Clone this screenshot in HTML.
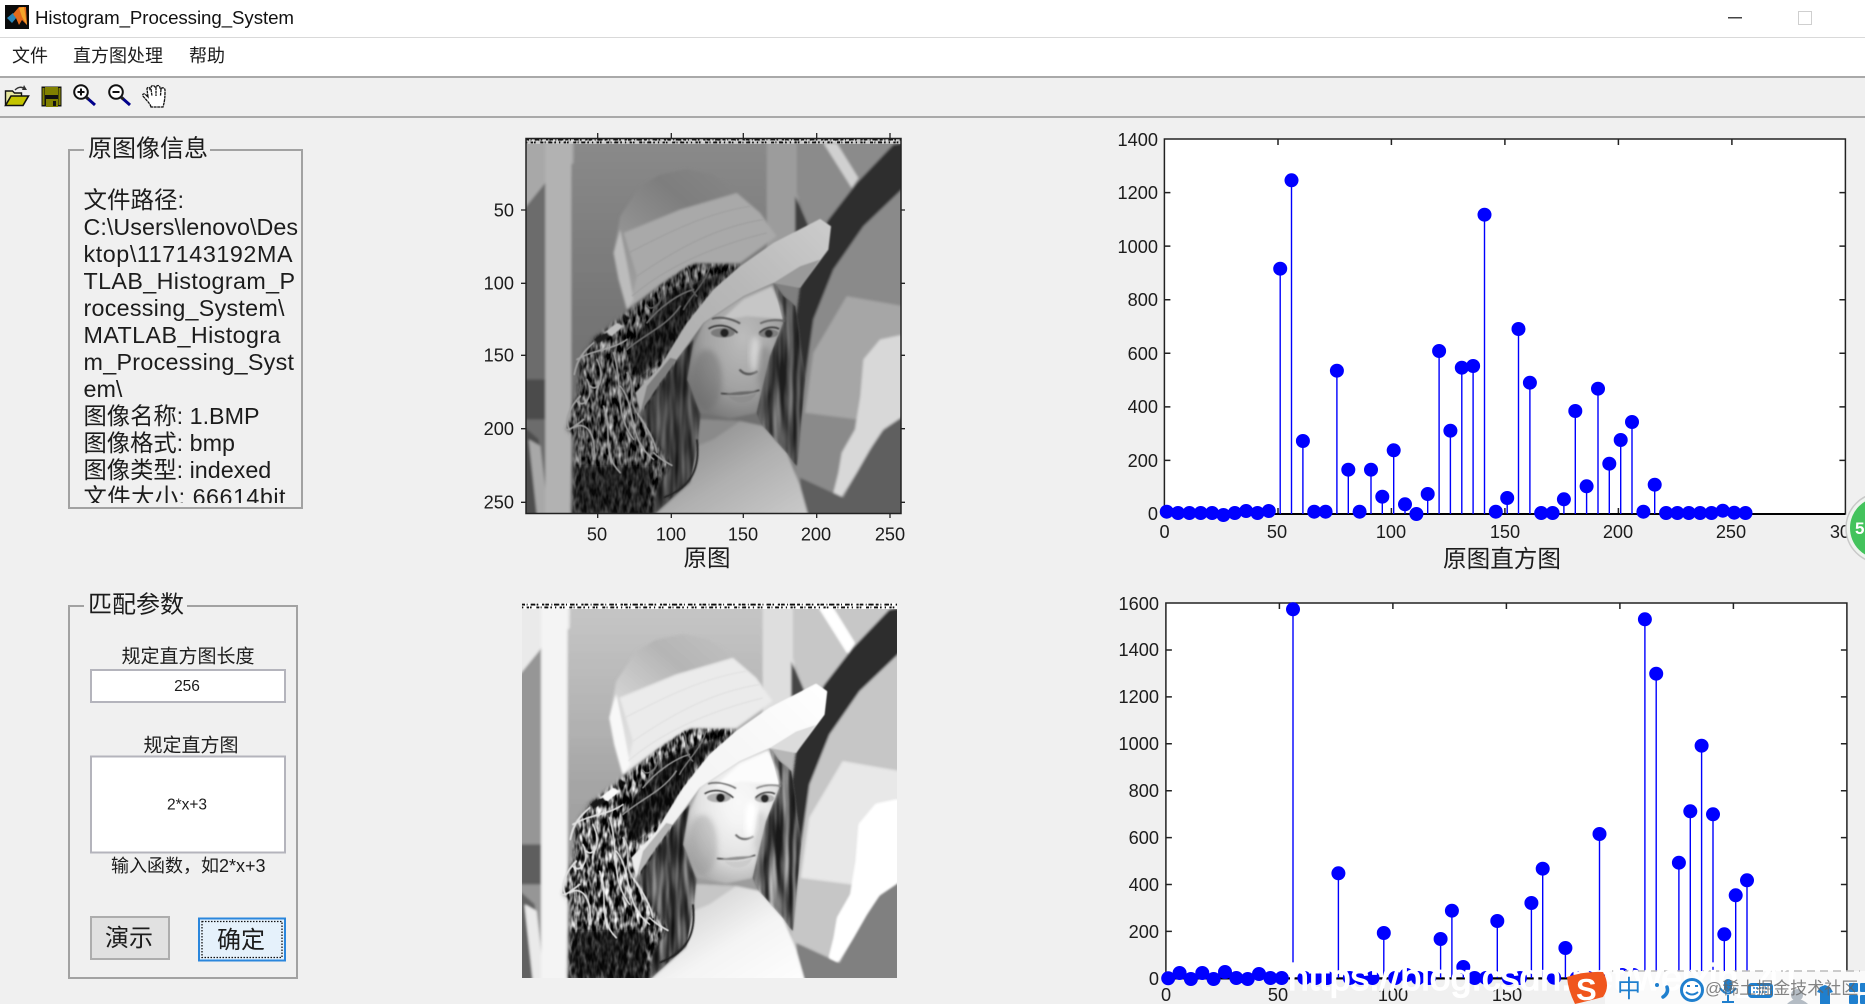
<!DOCTYPE html>
<html lang="zh">
<head>
<meta charset="utf-8">
<title>Histogram_Processing_System</title>
<style>
html,body{margin:0;padding:0;width:1865px;height:1004px;overflow:hidden;background:#f0f0f0}
svg.root{position:absolute;left:0;top:0;display:block}
text{font-family:"Liberation Sans","Noto Sans CJK SC",sans-serif;fill:#1c1c1c}
.t{font-size:18.2px}
.e{text-anchor:end}
.m{text-anchor:middle}
</style>
</head>
<body>
<svg class="root" xmlns="http://www.w3.org/2000/svg" width="1865" height="1004" viewBox="0 0 1865 1004">
<defs>
<filter id="b" x="-5%" y="-5%" width="110%" height="110%"><feGaussianBlur stdDeviation="4"/></filter>
<filter id="b2" x="-20%" y="-20%" width="140%" height="140%"><feGaussianBlur stdDeviation="2"/></filter>
<filter id="b3" x="-30%" y="-30%" width="160%" height="160%"><feGaussianBlur stdDeviation="9"/></filter>
<filter id="b4" x="-20%" y="-20%" width="140%" height="140%"><feGaussianBlur stdDeviation="1.2"/></filter>
<filter id="hair" color-interpolation-filters="sRGB" x="-5%" y="-5%" width="110%" height="110%">
<feTurbulence type="fractalNoise" baseFrequency=".075 .03" numOctaves="2" seed="7" result="n"/>
<feColorMatrix in="n" type="matrix" values="1.5 0 0 0 -.47  1.5 0 0 0 -.47  1.5 0 0 0 -.47  0 0 0 0 1" result="g"/>
<feGaussianBlur in="SourceAlpha" stdDeviation="6" result="sa"/>
<feComposite in="g" in2="sa" operator="in"/>
<feGaussianBlur stdDeviation="1"/>
</filter>
<filter id="hair2" color-interpolation-filters="sRGB" x="0" y="0" width="100%" height="100%">
<feTurbulence type="fractalNoise" baseFrequency=".05 .006" numOctaves="2" seed="3" result="n"/>
<feColorMatrix in="n" type="matrix" values="1.1 0 0 0 -.28  1.1 0 0 0 -.28  1.1 0 0 0 -.28  0 0 0 0 1" result="g"/>
<feComposite in="g" in2="SourceAlpha" operator="in"/>
<feGaussianBlur stdDeviation="1.5"/>
</filter>
<filter id="bright" color-interpolation-filters="sRGB" x="0" y="0" width="100%" height="100%">
<feComponentTransfer>
<feFuncR type="table" tableValues="0 .08 .2 .38 .55 .72 .86 .96 1 1 1"/>
<feFuncG type="table" tableValues="0 .08 .2 .38 .55 .72 .86 .96 1 1 1"/>
<feFuncB type="table" tableValues="0 .08 .2 .38 .55 .72 .86 .96 1 1 1"/>
</feComponentTransfer>
</filter>
<clipPath id="c1"><rect x="70" y="150" width="232" height="353"/></clipPath>
<linearGradient id="sh" x1="0" y1="0" x2="1" y2="1"><stop offset="0" stop-color="#808080"/><stop offset=".55" stop-color="#b0b0b0"/><stop offset="1" stop-color="#cacaca"/></linearGradient>
<linearGradient id="cr" x1="0" y1="1" x2="1" y2="0"><stop offset="0" stop-color="#a8a8a8"/><stop offset=".6" stop-color="#7e7e7e"/><stop offset="1" stop-color="#8a8a8a"/></linearGradient>
<linearGradient id="bg" x1="0" y1="0" x2="0" y2="1"><stop offset="0" stop-color="#8a8a8a"/><stop offset=".5" stop-color="#747474"/><stop offset="1" stop-color="#6a6a6a"/></linearGradient>
<linearGradient id="bm" x1="0" y1="1" x2="1" y2="0"><stop offset="0" stop-color="#a8a8a8"/><stop offset=".6" stop-color="#b8b8b8"/><stop offset="1" stop-color="#cccccc"/></linearGradient>
<radialGradient id="fc" cx=".58" cy=".4" r=".65"><stop offset="0" stop-color="#bcbcbc"/><stop offset=".6" stop-color="#a2a2a2"/><stop offset="1" stop-color="#787878"/></radialGradient>
<g id="lena">
<rect x="137" y="55" width="1126" height="1126" fill="#7f7f7f"/>
<g filter="url(#b)">
<rect x="265" y="60" width="610" height="1130" fill="url(#bg)"/>
<polygon points="130,60 280,60 280,130 195,190 130,270" fill="#a8a8a8"/>
<polygon points="130,270 195,190 195,1190 130,1190" fill="#6c6c6c"/>
<rect x="130" y="780" width="65" height="120" fill="#4c4c4c"/>
<polygon points="130,920 175,960 195,1190 130,1190" fill="#4e4e4e"/>
<polygon points="145,960 180,980 205,1190 170,1190" fill="#a8a8a8"/>
<rect x="195" y="60" width="78" height="1130" fill="#b2b2b2"/>
<rect x="860" y="60" width="95" height="330" fill="#9c9c9c"/>
<polygon points="950,60 1270,60 1270,100 1130,190 1045,300 990,330 950,220" fill="#8b8b8b"/>
<polygon points="945,230 990,330 970,340 945,380" fill="#3e3e3e"/>
<polygon points="1030,70 1070,70 1135,175 1115,205" fill="#d0d0d0"/>
<polygon points="1270,205 1270,1190 960,1190 945,1040 975,780 1000,600 1060,450 1150,320" fill="#8a8a8a"/>
<polygon points="1100,530 1270,560 1270,640 1150,720 1130,900 975,880 1000,700" fill="#a6a6a6"/>
<path d="M1270 70 L1240 75 L1130 190 L1045 300 L960 500 L945 620 L965 780 L975 780 L1000 600 L1060 450 L1150 320 L1270 205Z" fill="#2e2e2e"/>
<polygon points="975,895 1120,935 1085,1000 1070,1080 950,1060" fill="#8a8a8a"/>
<polygon points="1270,890 1200,940 1130,1060 1090,1135 960,1075 965,1190 1270,1190" fill="#5e5e5e"/>
<path d="M1270 645 L1200 660 L1150 720 L1140 830 L1125 930 L1085 1000 L1075 1060 L1060 1120 L1085 1132 L1130 1060 L1170 990 L1210 930 L1270 890Z" fill="#d8d8d8"/>
<polygon points="520,1190 630,1090 650,980 660,900 780,905 850,920 920,1000 960,1100 985,1190" fill="url(#sh)"/>
<polygon points="660,900 780,905 700,960 650,980" fill="#8a8a8a"/>
<path d="M590 720 L640 660 L620 780 L660 885 L650 980 L630 1085 L525 1180 L500 1190 L470 1000 L480 860Z" fill="#333"/>
<polygon points="880,490 910,530 945,560 975,780 950,1040 920,1000 850,920 830,880 870,710 910,610" fill="#4c4c4c"/>
<polygon points="670,610 790,530 880,490 910,610 870,710 830,880 750,897 660,880 620,780 640,680" fill="url(#fc)"/>
<polygon points="790,540 875,500 905,560 915,600 800,590 720,605" fill="#c6c6c6"/>
</g>
<path d="M590 720 L640 660 L620 780 L660 885 L650 980 L630 1085 L525 1180 L500 1190 L470 1000 L480 860Z" filter="url(#hair2)" opacity=".55"/>
<polygon points="880,490 910,530 945,560 975,780 950,1040 920,1000 850,920 830,880 870,710 910,610" filter="url(#hair2)" opacity=".6"/>
<path d="M340 660 L300 720 L290 830 L260 930 L285 960 L280 1185 L510 1185 L530 1100 L570 1035 L520 960 L480 880 L540 790 L590 720 L660 560 L780 435 L620 430 L440 580Z" filter="url(#hair)"/>
<path d="M440 690 L560 520 L760 445 L660 550 L570 700 L470 780Z" fill="#111" opacity=".7" filter="url(#b3)"/>
<path d="M285 1040 L520 1040 L510 1190 L280 1190Z" fill="#111" opacity=".65" filter="url(#b3)"/>
<g filter="url(#b4)" fill="none" stroke="#a0a0a0" stroke-width="5" stroke-linecap="round">
<path d="M340 670 C310 695 290 720 282 765"/><path d="M300 830 C270 860 250 900 268 932"/><path d="M310 900 C285 920 265 935 256 930"/>
<path d="M520 1000 C540 1020 560 1030 575 1038"/><path d="M290 720 C340 690 400 690 440 660"/><path d="M320 780 C345 830 310 870 290 845"/>
<path d="M400 700 C430 800 400 880 460 960"/><path d="M420 800 C470 860 440 960 520 1020"/><path d="M370 860 C400 940 360 1000 420 1060"/>
<path d="M280 925 C320 900 350 950 340 1020"/><path d="M470 880 C505 930 525 970 530 1000"/><path d="M350 720 C380 780 350 820 330 800"/>
<path d="M440 760 C470 800 440 840 470 880" stroke="#8a8a8a"/><path d="M500 610 C540 560 600 520 640 510" stroke="#6a6a6a"/><path d="M440 690 C500 640 560 620 600 560" stroke="#6a6a6a"/>
<path d="M620 440 C640 470 620 500 650 530" stroke="#5a5a5a"/><path d="M690 440 C670 500 630 530 610 570" stroke="#5a5a5a"/><path d="M540 500 C560 540 520 580 500 560" stroke="#5a5a5a"/>
</g>
<g filter="url(#b)">
<path d="M400 400 L420 290 L480 200 L540 165 L620 148 L700 165 L770 215 L840 280 L890 350 L780 430 L640 430 L560 480 L440 570 L415 480Z" fill="url(#cr)"/>
<path d="M430 340 L600 270 L770 220 L840 280 L890 350 L780 430 L640 430 L560 480 L450 560 L470 470Z" fill="#a9a9a9"/>
<path d="M400 400 L420 330 L440 430 L460 540 L440 570 L415 480Z" fill="#bcbcbc"/>
</g>
<g filter="url(#b2)">
<path d="M1020 298 L1053 320 L1045 390 L960 505 L880 490 L790 530 L670 610 L590 720 L540 790 L480 880 L465 820 L540 740 L620 610 L700 510 L780 440 L880 370Z" fill="url(#bm)"/>
<path d="M880 490 L960 505 L1020 420 L960 440Z" fill="#9a9a9a"/>
<path d="M480 880 L540 790 L590 720 L570 715 L500 800Z" fill="#7e7e7e"/>
<g fill="none" stroke="#9a9a9a" stroke-width="2.500">
<path d="M470 470 C600 380 720 320 850 300"/><path d="M455 530 C560 440 700 380 860 340"/><path d="M445 400 C560 340 680 280 810 260"/>
</g>
<path d="M430 585 l20 10 -15 15Z" fill="#111"/>
<path d="M370 640 l40 -30 20 10 -35 30Z" fill="#bdbdbd"/>
<path d="M340 660 l40 -22 10 12 -35 20Z" fill="#1c1c1c"/>
<ellipse cx="728" cy="640" rx="36" ry="14" fill="#7a7a7a"/><ellipse cx="865" cy="642" rx="30" ry="13" fill="#7e7e7e"/>
<circle cx="733" cy="640" r="13" fill="#222"/><circle cx="866" cy="642" r="12" fill="#2c2c2c"/>
<path d="M685 628 C710 612 745 615 772 640" fill="none" stroke="#2a2a2a" stroke-width="5"/><path d="M838 640 C855 622 880 620 897 628" fill="none" stroke="#333" stroke-width="5"/>
<path d="M695 598 C720 590 755 597 780 612" fill="none" stroke="#555" stroke-width="6"/><path d="M840 612 C865 600 890 600 915 605" fill="none" stroke="#666" stroke-width="6"/>
<path d="M722 822 C760 826 800 826 838 812" fill="none" stroke="#3a3a3a" stroke-width="5"/>
<path d="M735 824 C770 815 810 815 830 815 L835 815 C800 826 760 828 735 824Z" fill="#6a6a6a"/>
<path d="M745 830 C780 834 810 830 830 820 C815 855 770 862 745 830Z" fill="#8e8e8e"/>
<path d="M650 960 C660 1040 640 1100 550 1135" fill="none" stroke="#222" stroke-width="6"/>
<path d="M778 750 Q800 775 832 755" fill="none" stroke="#555" stroke-width="7"/>
</g>
<ellipse cx="825" cy="705" rx="15" ry="55" fill="#dedede" opacity=".8" filter="url(#b3)"/>
<ellipse cx="680" cy="780" rx="45" ry="90" fill="#6a6a6a" opacity=".45" filter="url(#b3)"/>
<ellipse cx="855" cy="750" rx="24" ry="70" fill="#6a6a6a" opacity=".35" filter="url(#b3)"/>
<rect x="137" y="55" width="1126" height="18" fill="#c8c8c8"/>
<g fill="none" stroke="#111">
<path d="M137 60H1263" stroke-width="6" stroke-dasharray="9 5 3 9 14 4 5 11 7 3 11 7 3 5 16 6"/>
<path d="M137 68H1263" stroke-width="6" stroke-dasharray="4 10 7 3 5 14 9 4 3 8 12 6 5 9"/>
</g>
<path d="M137 64H1263" stroke="#f4f4f4" stroke-width="3" stroke-dasharray="6 9 12 5 3 13 8 4"/>
</g>
</defs>

<!-- title bar -->
<rect x="0" y="0" width="1865" height="37" fill="#fff"/>
<rect x="0" y="37" width="1865" height="1" fill="#d9d9d9"/>
<rect x="5" y="5" width="24" height="24" fill="#0b0b0b"/>
<polygon points="7,18 13,13 17,17 12,23" fill="#2a86b8"/>
<polygon points="13,14 19,7 26,7 27,25 22,20 19,25 16,18" fill="#e36a1b"/>
<polygon points="19,8 24,7 27,25 22,17" fill="#f4a52a"/>
<text x="35" y="24" font-size="18.7" style="fill:#111" textLength="259">Histogram_Processing_System</text>
<rect x="1728" y="17" width="14" height="1.5" fill="#444"/>
<rect x="1798.5" y="11.5" width="13" height="13" fill="none" stroke="#cfcfcf"/>

<!-- menu bar -->
<rect x="0" y="38" width="1865" height="39" fill="#fff"/>
<rect x="0" y="76" width="1865" height="2" fill="#a9a9a9"/>
<text x="12" y="62" font-size="18">文件</text>
<text x="73" y="62" font-size="18">直方图处理</text>
<text x="189" y="62" font-size="18">帮助</text>

<!-- toolbar -->
<rect x="0" y="116" width="1865" height="2" fill="#a9a9a9"/>
<path d="M5.5 105 V91 h7 l2 2 h7 v3" fill="#e8e8a0" stroke="#111" stroke-width="1.4"/>
<path d="M5.5 105.500 L11 96 H28.500 L23 105.500Z" fill="#c4c400" stroke="#111" stroke-width="1.6"/>
<path d="M15 90 q5 -5 10 -1" fill="none" stroke="#333" stroke-width="1.4"/><path d="M24 85 l3 5 -5 0Z" fill="#333"/>
<rect x="41.500" y="86.500" width="20" height="20" fill="#111"/>
<rect x="45" y="87" width="13" height="8" fill="#808000"/><rect x="42.500" y="88" width="2" height="17" fill="#808000"/><rect x="58.500" y="88" width="2" height="17" fill="#808000"/>
<rect x="46" y="99" width="12" height="8" fill="#808000"/><rect x="53" y="101" width="3" height="5" fill="#111"/>
<circle cx="81" cy="92" r="6.800" fill="#fff" stroke="#111" stroke-width="2"/><path d="M77.500 92h7M81 88.500v7" stroke="#111" stroke-width="2"/><path d="M86 97l9 8" stroke="#00008b" stroke-width="3"/><path d="M86 97l2.500 2.200" stroke="#222" stroke-width="3"/>
<circle cx="116" cy="92" r="6.800" fill="#fff" stroke="#111" stroke-width="2"/><path d="M112.500 92h7" stroke="#111" stroke-width="2"/><path d="M121 97l9 8" stroke="#00008b" stroke-width="3"/><path d="M121 97l2.500 2.200" stroke="#222" stroke-width="3"/>
<path d="M151 107 C150 103 146 100 143 96 C142 94 144 93 146 95 L148 97 L147 89 C147 87 150 87 150 89 L151 88 C151 85 154 85 155 87 L156 87 C157 85 160 85 160 88 L161 89 C162 87 165 88 165 90 C165 96 165 100 163 107 Z M151 89 L152 96 M156 87 L156 96 M161 89 L160.500 96" fill="#fff" stroke="#111" stroke-width="1.300" stroke-dasharray="3 .6"/>

<!-- panel 1 -->
<path d="M84 150 H69 V508 H302 V150 H210" fill="none" stroke="#a2a2a2" stroke-width="2"/>
<text x="88" y="156.500" font-size="24">原图像信息</text>
<g clip-path="url(#c1)">
<text x="83.500" y="208" font-size="23.500">文件路径:</text>
<text x="83.500" y="235" font-size="23.300" textLength="214.500">C:\Users\lenovo\Des</text>
<text x="83.500" y="262" font-size="23.300" textLength="209">ktop\117143192MA</text>
<text x="83.500" y="289" font-size="23.300" textLength="211.500">TLAB_Histogram_P</text>
<text x="83.500" y="316" font-size="23.300" textLength="201">rocessing_System\</text>
<text x="83.500" y="343" font-size="23.300" textLength="197">MATLAB_Histogra</text>
<text x="83.500" y="370" font-size="23.300" textLength="210.500">m_Processing_Syst</text>
<text x="83.500" y="397" font-size="23.300">em\</text>
<text x="83.500" y="424" font-size="23.300">图像名称: 1.BMP</text>
<text x="83.500" y="451" font-size="23.300">图像格式: bmp</text>
<text x="83.500" y="478" font-size="23.300">图像类型: indexed</text>
<text x="83.500" y="505" font-size="23.300" textLength="202">文件大小: 66614bit</text>
</g>

<!-- panel 2 -->
<path d="M84 606 H69 V978 H297 V606 H187" fill="none" stroke="#a2a2a2" stroke-width="2"/>
<text x="88" y="612.500" font-size="24">匹配参数</text>
<text x="188" y="662.500" font-size="19" class="m">规定直方图长度</text>
<rect x="91" y="670" width="194" height="32" fill="#fff" stroke="#b4b4bc" stroke-width="2"/>
<text x="187" y="691" font-size="15.500" class="m">256</text>
<text x="191" y="751.500" font-size="19" class="m">规定直方图</text>
<rect x="91" y="756.500" width="194" height="96" fill="#fff" stroke="#b4b4bc" stroke-width="2"/>
<text x="187" y="809.500" font-size="15.500" class="m">2*x+3</text>
<text x="111" y="872" font-size="18">输入函数，如2*x+3</text>
<rect x="91" y="917" width="78" height="42" fill="#e1e1e1" stroke="#adadad" stroke-width="2"/>
<text x="129" y="946" font-size="24" class="m">演示</text>
<rect x="199" y="918.500" width="86" height="42" fill="#e5f1fb" stroke="#2a86dc" stroke-width="2"/>
<rect x="202" y="921.500" width="80" height="36" fill="none" stroke="#111" stroke-width="1.300" stroke-dasharray="1.500 1.500"/>
<text x="241" y="948" font-size="24" class="m">确定</text>

<!-- image 1 -->
<svg x="526" y="138" width="375" height="375" viewBox="137 55 1126 1126"><use href="#lena"/></svg>
<rect x="526" y="138.500" width="375" height="375" fill="none" stroke="#222" stroke-width="1.500"/>
<path d="M597.700 138v-5M671.300 138v-5M743.300 138v-5M816.700 138v-5M890 138v-5M597.700 514v4M671.300 514v4M743.300 514v4M816.700 514v4M890 514v4M526 210h-5M526 283.300h-5M526 355.300h-5M526 428.700h-5M526 502.300h-5M901 210h4M901 283.300h4M901 355.300h4M901 428.700h4M901 502.300h4" stroke="#222" stroke-width="1.300"/>
<text class="t e" x="514" y="216.500">50</text>
<text class="t e" x="514" y="289.500">100</text>
<text class="t e" x="514" y="361.500">150</text>
<text class="t e" x="514" y="435">200</text>
<text class="t e" x="514" y="508.500">250</text>
<text class="t m" x="597" y="540.500">50</text>
<text class="t m" x="671" y="540.500">100</text>
<text class="t m" x="743" y="540.500">150</text>
<text class="t m" x="816" y="540.500">200</text>
<text class="t m" x="890" y="540.500">250</text>
<text x="707" y="566" font-size="23.500" class="m">原图</text>

<!-- image 2 -->
<svg x="522" y="603" width="375" height="375" viewBox="137 55 1126 1126" filter="url(#bright)"><use href="#lena"/></svg>

<!-- chart 1 -->
<rect x="1164.400" y="139" width="681" height="375" fill="#fff"/>
<rect x="1164.400" y="139" width="681" height="375" fill="none" stroke="#222" stroke-width="1.500"/>
<path d="M1278 514v-6M1391.400 514v-6M1504.900 514v-6M1618.400 514v-6M1731.900 514v-6M1278 139v6M1391.400 139v6M1504.900 139v6M1618.400 139v6M1731.900 139v6M1164.400 460.400h6M1164.400 406.900h6M1164.400 353.300h6M1164.400 299.700h6M1164.400 246.100h6M1164.400 192.600h6M1845.400 460.400h-6M1845.400 406.900h-6M1845.400 353.300h-6M1845.400 299.700h-6M1845.400 246.100h-6M1845.400 192.600h-6" stroke="#222" stroke-width="1.500"/>
<path d="M1164 514H1845" stroke="#000" stroke-width="2"/>
<path stroke="#0000ff" stroke-width="1.400" fill="none" d="M1280.200 514V268.700M1291.500 514V180.300M1302.900 514V441M1336.900 514V370.700M1348.300 514V469.700M1371 514V469.700M1382.300 514V496.700M1393.700 514V450.300M1405 514V504.300M1427.700 514V494M1439.100 514V351M1450.400 514V430.700M1461.800 514V367.700M1473.100 514V366M1484.500 514V214.700M1507.200 514V498M1518.500 514V329M1529.900 514V382.700M1563.900 514V499.300M1575.300 514V411M1586.600 514V486.300M1598 514V388.700M1609.300 514V463.700M1620.700 514V440M1632 514V422M1654.700 514V484.700"/>
<path stroke="#0000ff" stroke-width="14" stroke-linecap="round" fill="none" d="M1166.700 511.700h.01M1178 513h.01M1189.400 513h.01M1200.700 513h.01M1212.100 513h.01M1223.400 515h.01M1234.800 513h.01M1246.100 511h.01M1257.500 513h.01M1268.800 511h.01M1280.200 268.700h.01M1291.500 180.300h.01M1302.900 441h.01M1314.200 511.700h.01M1325.600 511.700h.01M1336.900 370.700h.01M1348.300 469.700h.01M1359.600 511.700h.01M1371 469.700h.01M1382.300 496.700h.01M1393.700 450.300h.01M1405 504.300h.01M1416.400 514h.01M1427.700 494h.01M1439.100 351h.01M1450.400 430.700h.01M1461.800 367.700h.01M1473.100 366h.01M1484.500 214.700h.01M1495.800 511.700h.01M1507.200 498h.01M1518.500 329h.01M1529.900 382.700h.01M1541.200 513h.01M1552.600 513h.01M1563.900 499.300h.01M1575.300 411h.01M1586.600 486.300h.01M1598 388.700h.01M1609.300 463.700h.01M1620.700 440h.01M1632 422h.01M1643.400 511.700h.01M1654.700 484.700h.01M1666.100 513h.01M1677.400 513h.01M1688.800 513h.01M1700.100 513h.01M1711.500 513h.01M1722.800 510.700h.01M1734.200 512.700h.01M1745.500 513h.01"/>
<text class="t e" x="1158" y="146">1400</text>
<text class="t e" x="1158" y="199">1200</text>
<text class="t e" x="1158" y="253">1000</text>
<text class="t e" x="1158" y="306">800</text>
<text class="t e" x="1158" y="360">600</text>
<text class="t e" x="1158" y="413">400</text>
<text class="t e" x="1158" y="467">200</text>
<text class="t e" x="1158" y="520">0</text>
<text class="t m" x="1164.500" y="538">0</text>
<text class="t m" x="1277" y="538">50</text>
<text class="t m" x="1391" y="538">100</text>
<text class="t m" x="1505" y="538">150</text>
<text class="t m" x="1618" y="538">200</text>
<text class="t m" x="1731" y="538">250</text>
<text class="t m" x="1845" y="538">300</text>
<text x="1502" y="567" font-size="23.600" class="m">原图直方图</text>
<circle cx="1881" cy="528" r="35" fill="#eef3ee" stroke="#c9c9c9" stroke-width="1.500"/>
<circle cx="1881" cy="528" r="31" fill="#43c35c"/>
<text x="1855" y="534" font-size="17" font-weight="bold" style="fill:#fff">5</text>

<!-- chart 2 -->
<rect x="1165.900" y="603" width="681" height="375" fill="#fff"/>
<rect x="1165.900" y="603" width="681" height="375" fill="none" stroke="#222" stroke-width="1.500"/>
<path d="M1279.400 978v-6M1392.900 978v-6M1506.400 978v-6M1619.900 978v-6M1733.400 978v-6M1279.400 603v6M1392.900 603v6M1506.400 603v6M1619.900 603v6M1733.400 603v6M1165.900 931.400h6M1165.900 884.500h6M1165.900 837.600h6M1165.900 790.700h6M1165.900 743.800h6M1165.900 696.900h6M1165.900 650h6M1846.900 931.400h-6M1846.900 884.500h-6M1846.900 837.600h-6M1846.900 790.700h-6M1846.900 743.800h-6M1846.900 696.900h-6M1846.900 650h-6" stroke="#222" stroke-width="1.500"/>
<path d="M1166 978.500H1846" stroke="#000" stroke-width="2"/>
<path stroke="#0000ff" stroke-width="1.400" fill="none" d="M1293 978V609.300M1338.400 978V873.300M1383.800 978V933M1440.600 978V939M1451.900 978V910.700M1463.300 978V967M1497.300 978V921M1531.400 978V903M1542.700 978V868.700M1565.400 978V948M1599.500 978V834M1644.900 978V619.300M1656.200 978V673.700M1678.900 978V862.700M1690.300 978V811.300M1701.600 978V745.700M1713 978V814.300M1724.300 978V934.300M1735.700 978V895.300M1747 978V880.300"/>
<path stroke="#0000ff" stroke-width="14" stroke-linecap="round" fill="none" d="M1168.200 978.300h.01M1179.600 973h.01M1190.900 979h.01M1202.300 973h.01M1213.600 979h.01M1225 972h.01M1236.300 978h.01M1247.700 979h.01M1259 974h.01M1270.400 978h.01M1281.700 978h.01M1293 609.300h.01M1304.400 978h.01M1315.700 978h.01M1327.100 978h.01M1338.400 873.300h.01M1349.800 978h.01M1361.100 978h.01M1372.500 978h.01M1383.800 933h.01M1395.200 978h.01M1406.500 975h.01M1417.900 978h.01M1429.200 978h.01M1440.600 939h.01M1451.900 910.700h.01M1463.300 967h.01M1474.600 978h.01M1486 978h.01M1497.300 921h.01M1508.700 978h.01M1520 978h.01M1531.400 903h.01M1542.700 868.700h.01M1554.100 977.700h.01M1565.400 948h.01M1576.800 978h.01M1588.100 978h.01M1599.500 834h.01M1610.800 978h.01M1622.200 975h.01M1633.500 975h.01M1644.900 619.300h.01M1656.200 673.700h.01M1667.600 978h.01M1678.900 862.700h.01M1690.300 811.300h.01M1701.600 745.700h.01M1713 814.300h.01M1724.300 934.300h.01M1735.700 895.300h.01M1747 880.300h.01"/>
<text class="t e" x="1159" y="610">1600</text>
<text class="t e" x="1159" y="656">1400</text>
<text class="t e" x="1159" y="703">1200</text>
<text class="t e" x="1159" y="750">1000</text>
<text class="t e" x="1159" y="797">800</text>
<text class="t e" x="1159" y="844">600</text>
<text class="t e" x="1159" y="891">400</text>
<text class="t e" x="1159" y="938">200</text>
<text class="t e" x="1159" y="985">0</text>
<text class="t m" x="1166" y="1001">0</text>
<text class="t m" x="1278" y="1001">50</text>
<text class="t m" x="1393" y="1001">100</text>
<text class="t m" x="1507" y="1001">150</text>

<!-- input method bar and watermark -->
<rect x="1605" y="971" width="260" height="33" fill="#fafafa"/>
<path d="M1612 971H1860" stroke="#bbb" stroke-width="1.500" stroke-dasharray="8 5"/>
<text x="1288" y="990" font-size="37.500" stroke="#fff" stroke-width="1.200" style="fill:#fff">https://blog.csdn.net/weixin_41</text>
<path d="M1567 977 Q1585 971 1603 972 Q1611 986 1603 997 Q1588 1001 1575 1004 Q1568 990 1567 977Z" fill="#f0561d"/>
<text x="1576" y="1000" font-size="31" font-weight="bold" style="fill:#fff">S</text>
<text x="1617" y="997" font-size="24" style="fill:#1f7fce">中</text>
<circle cx="1657" cy="985" r="2" fill="#1f7fce"/>
<path d="M1667 987 q2 6 -4 10" fill="none" stroke="#1f7fce" stroke-width="3.500" stroke-linecap="round"/>
<circle cx="1692" cy="990" r="10.500" fill="#fff" stroke="#1f7fce" stroke-width="3"/><path d="M1687 986h3M1695 986h3M1686 992q6 5 12 0" fill="none" stroke="#1f7fce" stroke-width="2"/>
<rect x="1724" y="979" width="8" height="13" rx="4" fill="#1f7fce"/><path d="M1720 988q8 11 16 0M1728 995v6M1722 1002h12" fill="none" stroke="#1f7fce" stroke-width="2"/>
<rect x="1749.500" y="984.500" width="22" height="12" rx="2" fill="#fff" stroke="#1f7fce" stroke-width="3"/>
<path d="M1753 988h15M1753 992h15" stroke="#1f7fce" stroke-width="1.500" stroke-dasharray="2 1"/>
<circle cx="1797" cy="995" r="6" fill="#b4bcc4"/><path d="M1787 1004q10-10 21 0Z" fill="#b4bcc4"/>
<path d="M1820 987l5-2 5 2 3 5-3 1v11h-10v-11l-3-1Z" fill="#1f7fce"/>
<rect x="1849" y="983" width="9" height="9" rx="1" fill="#1f7fce"/><rect x="1849" y="995" width="9" height="9" rx="1" fill="#1f7fce"/><rect x="1860" y="983" width="9" height="9" rx="1" fill="#1f7fce"/><rect x="1860" y="995" width="9" height="9" rx="1" fill="#1f7fce"/>
<text x="1705" y="994" font-size="17" style="fill:#666;opacity:.8">@稀土掘金技术社区</text>
</svg>
</body>
</html>
